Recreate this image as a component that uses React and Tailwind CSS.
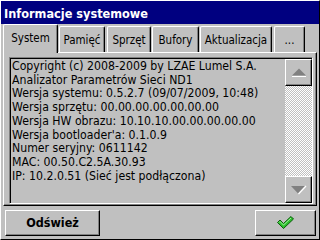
import React from 'react';

const tabs = [
  { label: 'System', cls: 'w-[55px] ml-[2px] h-[29px] -mb-px z-10' },
  { label: 'Pamięć', cls: 'w-[46px] ml-[1px] h-[26px]' },
  { label: 'Sprzęt', cls: 'w-[44px] ml-[2px] h-[26px]' },
  { label: 'Bufory', cls: 'w-[47px] ml-[1px] h-[26px]' },
  { label: 'Aktualizacja', cls: 'w-[72px] ml-[1px] h-[26px]' },
  { label: '...', cls: 'w-[31px] ml-[2px] h-[26px]' },
];

const lines = [
  'Copyright (c) 2008-2009 by LZAE Lumel S.A.',
  'Analizator Parametrów Sieci ND1',
  'Wersja systemu: 0.5.2.7 (09/07/2009, 10:48)',
  'Wersja sprzętu: 00.00.00.00.00.00.00',
  'Wersja HW obrazu: 10.10.10.00.00.00.00.00',
  "Wersja bootloader'a: 0.1.0.9",
  'Numer seryjny: 0611142',
  'MAC: 00.50.C2.5A.30.93',
  'IP: 10.2.0.51 (Sieć jest podłączona)',
];

const raised = 'border border-t-white border-l-white border-r-black border-b-black shadow-[inset_-1px_-1px_0_#808080]';

function Check() {
  return (
    <svg width="18" height="14" viewBox="0 0 18 14">
      <polygon points="0.5,6.5 3,4 6.5,7.5 14,0.5 16.5,3 6.5,12.5" fill="#2cc02c" stroke="#0b5c0b" strokeWidth="1" strokeLinejoin="round" />
      <polyline points="2,6.5 3,5.5 6.5,9 14,2" fill="none" stroke="#9ff09f" strokeWidth="1" />
    </svg>
  );
}

export default function App() {
  return (
    <div className="w-[320px] h-[240px] bg-[#c0c0c0] border border-t-white border-l-white border-r-black border-b-black flex flex-col font-['DejaVu_Sans_Condensed','Liberation_Sans',sans-serif] text-black">
      <div className="h-[23px] bg-[#000080] text-white font-bold text-[12.6px] leading-[23px] pl-[3px] pt-px">
        Informacje systemowe
      </div>

      <div className="flex items-end h-[28px]">
        {tabs.map((t) => (
          <div
            key={t.label}
            className={`relative ${t.cls} bg-[#c0c0c0] rounded-t-[2px] border-t border-l border-r border-t-white border-l-white border-r-black shadow-[inset_-1px_0_0_#808080] flex justify-center pt-[6px] text-[11.5px] leading-[14px]`}
          >
            {t.label}
          </div>
        ))}
      </div>

      <div className="ml-[2px] w-[314px] h-[154px] border border-t-white border-l-white border-r-black border-b-black shadow-[inset_-1px_-1px_0_#808080] pt-[4px] pl-[5px]">
        <div className="w-[304px] h-[147px] border border-t-[#808080] border-l-[#808080] border-r-white border-b-white shadow-[inset_1px_1px_0_#000] flex pt-px pl-px">
          <div className="flex-1 pt-[1px] pl-px text-[12.2px] leading-[13.7px] whitespace-nowrap overflow-hidden">
            {lines.map((l) => (
              <div key={l}>{l}</div>
            ))}
          </div>
          <div className="w-[27px] flex flex-col">
            <div className={`h-[27px] ${raised} flex items-center justify-center`}>
              <svg width="16" height="9" viewBox="0 0 16 9">
                <polygon points="8,0.5 15,7.5 1,7.5" fill="#808080" />
                <line x1="1" y1="8.5" x2="15" y2="8.5" stroke="#fff" strokeWidth="1" />
              </svg>
            </div>
            <div className="flex-1 bg-[repeating-conic-gradient(#ffffff_0_25%,#c0c0c0_0_50%)] bg-size-[2px_2px]" />
            <div className={`h-[27px] ${raised} flex items-center justify-center`}>
              <svg width="17" height="10" viewBox="0 0 17 10">
                <polygon points="1,1 15,1 8,8.5" fill="#808080" />
                <line x1="16" y1="1" x2="8.5" y2="9" stroke="#fff" strokeWidth="1.2" />
              </svg>
            </div>
          </div>
        </div>
      </div>

      <div className="flex justify-between mt-[4px] pl-[4px] pr-[3px]">
        <div className={`w-[95px] h-[26px] ${raised} flex items-center justify-center font-bold text-[12.5px]`}>
          Odśwież
        </div>
        <div className={`w-[61px] h-[26px] ${raised} flex items-center justify-center`}>
          <Check />
        </div>
      </div>
    </div>
  );
}
